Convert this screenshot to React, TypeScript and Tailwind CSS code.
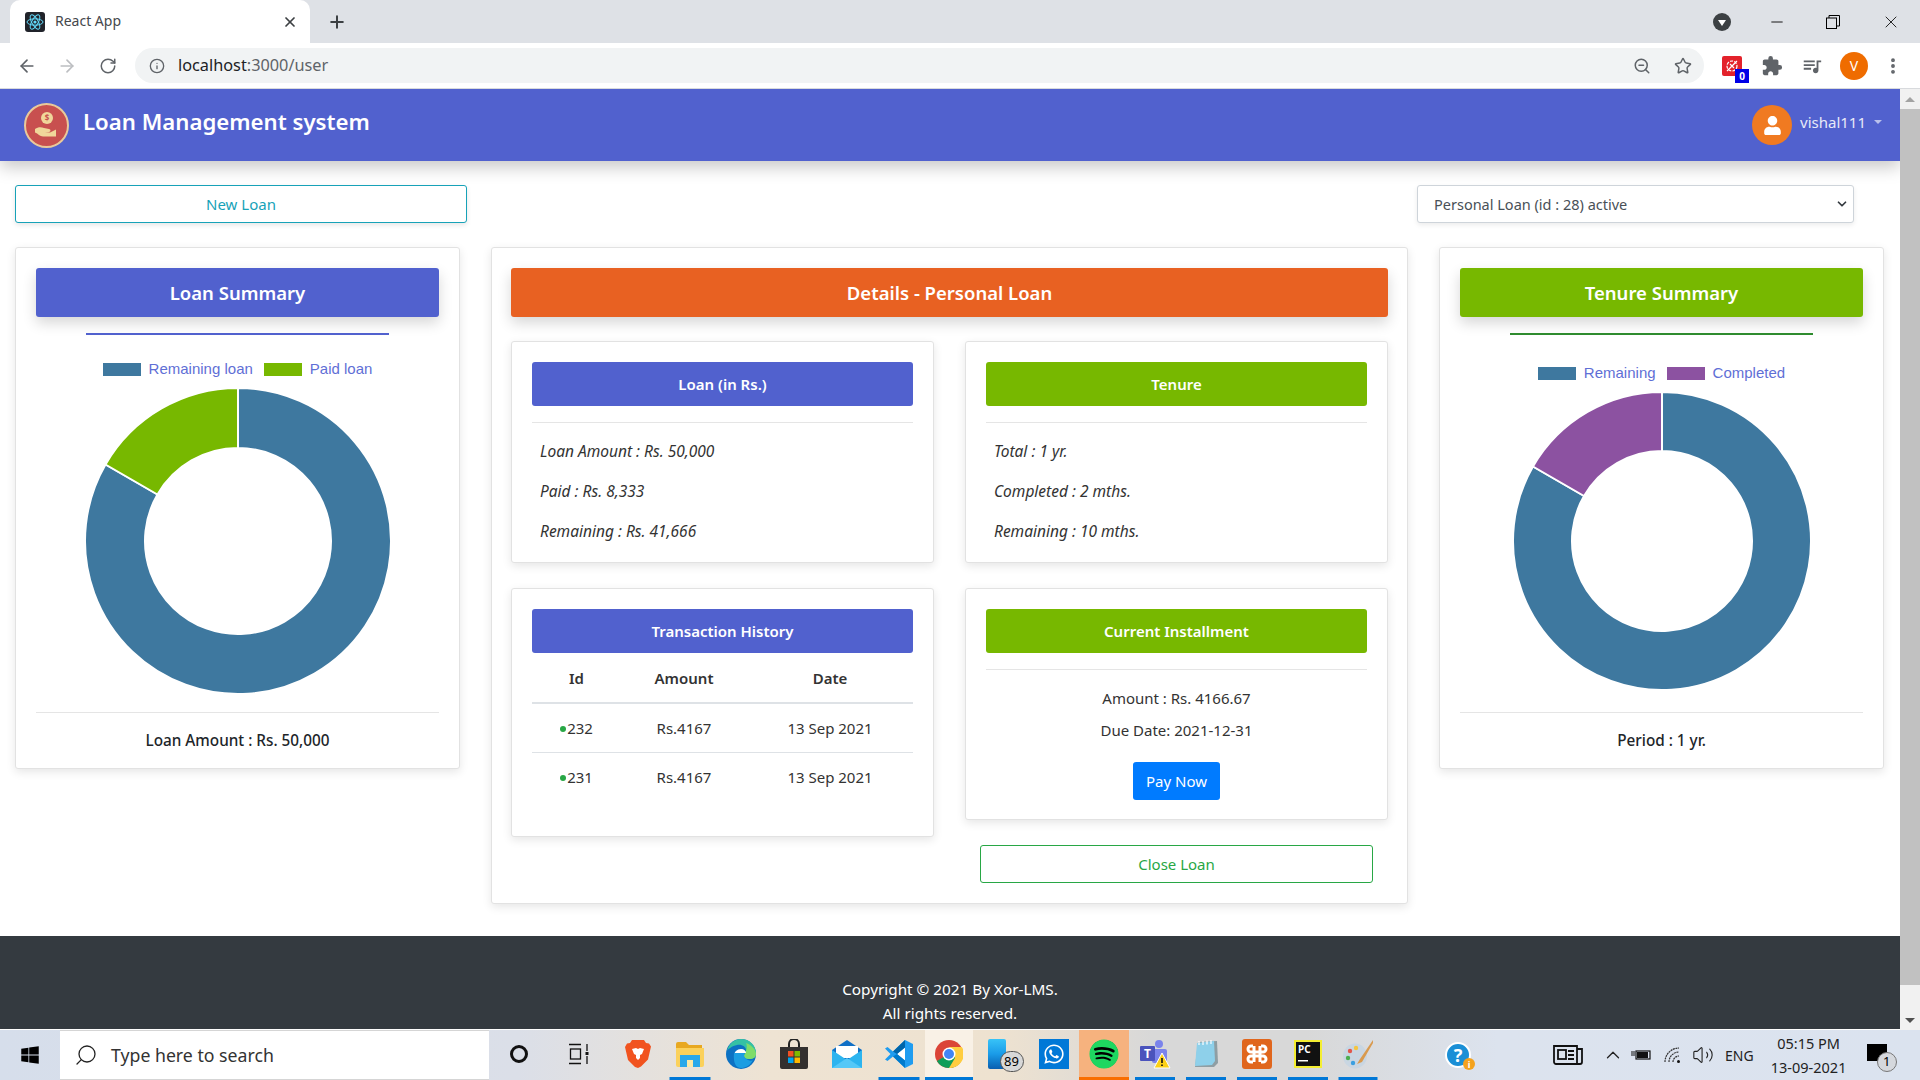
import type { ReactNode } from "react";
import {
  ArrowLeft,
  ArrowRight,
  ChevronDown,
  ChevronUp,
  EllipsisVertical,
  Info,
  Minus,
  Plus,
  RotateCw,
  Search,
  Star,
  Volume2,
  X,
  ZoomOut,
} from "lucide-react";
import { MdExtension, MdQueueMusic } from "react-icons/md";
import { FaSpotify, FaUser, FaWhatsapp, FaWindows } from "react-icons/fa";

const FONT = "font-['Noto_Sans','Open_Sans',sans-serif]";

function donutSlice(cx: number, cy: number, R: number, r: number, from: number, to: number) {
  const pt = (rad: number, a: number) => {
    const t = ((a - 90) * Math.PI) / 180;
    return `${(cx + rad * Math.cos(t)).toFixed(2)} ${(cy + rad * Math.sin(t)).toFixed(2)}`;
  };
  const large = to - from > 180 ? 1 : 0;
  return `M${pt(R, from)} A${R} ${R} 0 ${large} 1 ${pt(R, to)} L${pt(r, to)} A${r} ${r} 0 ${large} 0 ${pt(r, from)} Z`;
}

function Donut({ outer, inner, color }: { outer: number; inner: number; color: string }) {
  const size = outer * 2 + 4;
  const c = size / 2;
  return (
    <svg width={size} height={size} viewBox={`0 0 ${size} ${size}`}>
      <path d={donutSlice(c, c, outer, inner, 0, 300)} fill="#3e789f" stroke="#fff" strokeWidth="2" />
      <path d={donutSlice(c, c, outer, inner, 300, 360)} fill={color} stroke="#fff" strokeWidth="2" />
    </svg>
  );
}

function Legend({ items }: { items: { label: string; color: string }[] }) {
  return (
    <div className="flex items-center justify-center gap-[11px] font-['Liberation_Sans',sans-serif] text-[15px] leading-[16px] text-[#5f6fd6]">
      {items.map((item) => (
        <div key={item.label} className="flex items-center gap-[8px]">
          <span className={`h-[13px] w-[38px] ${item.color}`} />
          <span>{item.label}</span>
        </div>
      ))}
    </div>
  );
}

function Card({ className, children }: { className: string; children: ReactNode }) {
  return (
    <div className={`rounded-[3px] border border-[#e2e2e2] bg-white shadow-[0_3px_10px_rgba(0,0,0,0.1)] ${className}`}>
      {children}
    </div>
  );
}

function InnerCard({ className, title, color, children }: { className: string; title: string; color: string; children: ReactNode }) {
  return (
    <Card className={`px-[20px] pt-[20px] ${className}`}>
      <div className={`flex h-[44px] items-center justify-center rounded-[3px] text-[15px] font-semibold text-white ${color}`}>
        {title}
      </div>
      {children}
    </Card>
  );
}

function DetailLines({ lines }: { lines: string[] }) {
  return (
    <>
      <div className="mt-[16px] h-px bg-[#e5e5e5]" />
      <div className="mt-[8px] flex flex-col pl-[8px] text-[15.5px] italic leading-[40px] text-[#333]">
        {lines.map((line) => (
          <p key={line}>{line}</p>
        ))}
      </div>
    </>
  );
}

function Chrome() {
  return (
    <div className="shrink-0">
      <div className="flex h-[43px] items-end bg-[#dee1e6]">
        <div className="ml-[10px] flex h-[43px] w-[300px] items-center rounded-t-[10px] bg-white pl-[15px] pr-[12px]">
          <svg width="20" height="20" viewBox="0 0 20 20">
            <rect width="20" height="20" rx="3" fill="#20232a" />
            <g fill="none" stroke="#61dafb" strokeWidth="1">
              <ellipse cx="10" cy="10" rx="8" ry="3.2" />
              <ellipse cx="10" cy="10" rx="8" ry="3.2" transform="rotate(60 10 10)" />
              <ellipse cx="10" cy="10" rx="8" ry="3.2" transform="rotate(120 10 10)" />
            </g>
            <circle cx="10" cy="10" r="1.6" fill="#61dafb" />
          </svg>
          <span className="mb-[2px] ml-[10px] flex-1 text-[14px] text-[#45484c]">React App</span>
          <X size={16} strokeWidth={2.6} className="text-[#3c4043]" />
        </div>
        <div className="flex h-[43px] w-[54px] items-center justify-center">
          <Plus size={20} strokeWidth={2.4} className="text-[#3c4043]" />
        </div>
        <div className="flex-1" />
        <div className="flex h-[43px] items-center">
          <div className="flex h-[18px] w-[18px] items-center justify-center rounded-full bg-[#3c4043]">
            <span className="mt-[2px] h-0 w-0 border-x-[4px] border-t-[6px] border-x-transparent border-t-white" />
          </div>
          <Minus size={18} strokeWidth={1.2} className="ml-[37px] text-black" />
          <svg className="ml-[40px]" width="14" height="14" viewBox="0 0 14 14" fill="none" stroke="#000" strokeWidth="1">
            <rect x="0.5" y="3" width="10" height="10.5" fill="#dee1e6" />
            <path d="M3 3V.5h10.5V11H10.5" />
          </svg>
          <X size={20} strokeWidth={1} className="ml-[41px] mr-[19px] text-black" />
        </div>
      </div>
      <div className="flex h-[46px] items-center border-b border-[#d8dadd] bg-white">
        <ArrowLeft size={20} className="ml-[17px] text-[#5f6368]" />
        <ArrowRight size={20} className="ml-[20px] text-[#bcbec1]" />
        <RotateCw size={18} className="ml-[22px] text-[#5f6368]" />
        <div className="ml-[18px] flex h-[35px] w-[1569px] items-center rounded-full bg-[#f1f3f4] pl-[14px] pr-[12px]">
          <Info size={16} className="text-[#5f6368]" />
          <span className="ml-[13px] flex-1 text-[16.3px] text-[#5f6368]">
            <span className="text-[#202124]">localhost</span>:3000/user
          </span>
          <ZoomOut size={18} className="text-[#5f6368]" />
          <Star size={18} className="ml-[23px] text-[#5f6368]" />
        </div>
        <div className="relative ml-[18px] flex h-[20px] w-[20px] items-center justify-center rounded-[2px] bg-[#e3222b]">
          <svg width="16" height="16" viewBox="0 0 16 16" fill="none" stroke="#fff" strokeWidth="1.2">
            <circle cx="8" cy="8" r="5" strokeDasharray="3 1.2" />
            <path d="M3 13L13 3M6 6l4 4" />
          </svg>
          <span className="absolute -bottom-[7px] -right-[7px] flex h-[14px] w-[14px] items-center justify-center bg-[#0000e6] text-[10px] font-bold leading-none text-white">
            0
          </span>
        </div>
        <MdExtension size={22} className="ml-[19px] text-[#5f6368]" />
        <MdQueueMusic size={22} className="ml-[18px] text-[#5f6368]" />
        <div className="ml-[17px] flex h-[28px] w-[28px] items-center justify-center rounded-full bg-[#ef6c00] text-[14px] text-white">
          V
        </div>
        <EllipsisVertical size={20} strokeWidth={2.6} className="ml-[15px] text-[#5f6368]" />
      </div>
    </div>
  );
}

function Navbar() {
  return (
    <header className="relative z-10 flex h-[72px] shrink-0 items-center justify-between bg-[#5161ce] pl-[24px] pr-[18px] shadow-[0_6px_16px_rgba(0,0,0,0.22)]">
      <div className="flex items-center">
        <div className="flex h-[45px] w-[45px] items-center justify-center rounded-full border-2 border-[#e9c99a] bg-[#c8504f]">
          <svg width="32" height="32" viewBox="0 0 32 32">
            <circle cx="16" cy="9" r="6" fill="#f0d79a" />
            <text x="16" y="12" textAnchor="middle" fontSize="8" fill="#c8504f" fontWeight="700">$</text>
            <path d="M4 20c3-2 6-2 9-1l5 1c2 .4 2 2.6 0 3h-4l5 .5 6-3v7H12c-3 0-5-3-8-4z" fill="#f0d79a" />
          </svg>
        </div>
        <span className="mb-[7px] ml-[14px] text-[22.2px] font-semibold text-white">Loan Management system</span>
      </div>
      <div className="flex items-center">
        <div className="flex h-[40px] w-[40px] items-center justify-center rounded-full bg-[#f07a21]">
          <FaUser size={19} className="text-white" />
        </div>
        <span className="mb-[5px] ml-[8px] text-[15px] text-[#e8eaf8]">vishal111</span>
        <span className="mb-[6px] ml-[8px] h-0 w-0 border-x-[4px] border-t-[4px] border-x-transparent border-t-[#b9c0ec]" />
      </div>
    </header>
  );
}

function Dashboard() {
  return (
    <div className="px-[15px]">
      <div className="flex justify-between pr-[31px] pt-[24px]">
        <button className="flex h-[38px] w-[452px] items-center justify-center rounded-[3px] border border-[#17a2b8] bg-white text-[15px] text-[#17a2b8] shadow-[0_2px_5px_rgba(0,0,0,0.1)]">
          New Loan
        </button>
        <div className="relative h-[38px] w-[437px]">
          <select
            defaultValue="28"
            className="h-full w-full appearance-none rounded-[3px] border border-[#ced4da] bg-white px-[16px] pt-[1px] text-[14.5px] text-[#495057] shadow-[0_2px_5px_rgba(0,0,0,0.08)]"
          >
            <option value="28">Personal Loan (id : 28) active</option>
          </select>
          <ChevronDown size={14} strokeWidth={3} className="pointer-events-none absolute right-[5px] top-[12px] text-[#343a40]" />
        </div>
      </div>

      <div className="mt-[24px] flex items-start">
        <Card className="h-[522px] w-[445px] shrink-0 px-[20px] pt-[20px]">
          <div className="flex h-[49px] items-center justify-center rounded-[3px] bg-[#5161ce] text-[18.5px] font-semibold text-white shadow-[0_6px_14px_rgba(0,0,0,0.16)]">
            Loan Summary
          </div>
          <div className="mx-[50px] mt-[16px] h-[2px] bg-[#5161ce]" />
          <div className="mt-[26px]">
            <Legend
              items={[
                { label: "Remaining loan", color: "bg-[#3e789f]" },
                { label: "Paid loan", color: "bg-[#77b800]" },
              ]}
            />
          </div>
          <div className="mt-[9px] flex justify-center">
            <Donut outer={153} inner={93} color="#77b800" />
          </div>
          <div className="mt-[16px] h-px bg-[#e5e5e5]" />
          <p className="mt-[16px] text-center text-[15.3px] font-medium text-[#212529]">Loan Amount : Rs. 50,000</p>
        </Card>

        <Card className="ml-[31px] w-[917px] shrink-0 px-[19px] pb-[20px] pt-[20px]">
          <div className="flex h-[49px] items-center justify-center rounded-[3px] bg-[#e86122] text-[18.5px] font-semibold text-white shadow-[0_6px_14px_rgba(0,0,0,0.16)]">
            Details - Personal Loan
          </div>
          <div className="mt-[24px] grid grid-cols-2 items-start gap-x-[31px]">
            <div className="flex flex-col gap-[25px]">
              <InnerCard className="h-[222px]" title="Loan (in Rs.)" color="bg-[#5161ce]">
                <DetailLines lines={["Loan Amount : Rs. 50,000", "Paid : Rs. 8,333", "Remaining : Rs. 41,666"]} />
              </InnerCard>
              <InnerCard className="h-[249px]" title="Transaction History" color="bg-[#5161ce]">
                <table className="w-full text-center text-[15px] text-[#333]">
                  <thead>
                    <tr className="h-[50px] border-b-2 border-[#dee2e6] font-semibold">
                      <th className="w-[89px] pt-[2px] font-semibold">Id</th>
                      <th className="w-[126px] pt-[2px] font-semibold">Amount</th>
                      <th className="pt-[2px] font-semibold">Date</th>
                    </tr>
                  </thead>
                  <tbody>
                    {["232", "231"].map((id) => (
                      <tr key={id} className="h-[49px] border-b border-[#dee2e6] last:border-b-0">
                        <td>
                          <span className="mr-px inline-block h-[6px] w-[6px] rounded-full bg-[#28a745] align-middle" />
                          {id}
                        </td>
                        <td>Rs.4167</td>
                        <td>13 Sep 2021</td>
                      </tr>
                    ))}
                  </tbody>
                </table>
              </InnerCard>
            </div>
            <div className="flex flex-col">
              <InnerCard className="h-[222px]" title="Tenure" color="bg-[#77b800]">
                <DetailLines lines={["Total : 1 yr.", "Completed : 2 mths.", "Remaining : 10 mths."]} />
              </InnerCard>
              <InnerCard className="mt-[25px] h-[232px]" title="Current Installment" color="bg-[#77b800]">
                <div className="mt-[16px] h-px bg-[#e5e5e5]" />
                <div className="mt-[12px] text-center text-[15px] leading-[32px] text-[#333]">
                  <p>Amount : Rs. 4166.67</p>
                  <p>Due Date: 2021-12-31</p>
                </div>
                <div className="mt-[16px] flex justify-center">
                  <button className="flex h-[38px] w-[87px] items-center justify-center rounded-[3px] bg-[#007bff] text-[15px] text-white">
                    Pay Now
                  </button>
                </div>
              </InnerCard>
              <button className="mx-[15px] mt-[25px] flex h-[38px] items-center justify-center rounded-[3px] border border-[#28a745] bg-white text-[15px] text-[#28a745]">
                Close Loan
              </button>
            </div>
          </div>
        </Card>

        <Card className="ml-[31px] h-[522px] w-[445px] shrink-0 px-[20px] pt-[20px]">
          <div className="flex h-[49px] items-center justify-center rounded-[3px] bg-[#77b800] text-[18.5px] font-semibold text-white shadow-[0_6px_14px_rgba(0,0,0,0.16)]">
            Tenure Summary
          </div>
          <div className="mx-[50px] mt-[16px] h-[2px] bg-[#2e8b2e]" />
          <div className="mt-[30px]">
            <Legend
              items={[
                { label: "Remaining", color: "bg-[#3e789f]" },
                { label: "Completed", color: "bg-[#8c52a1]" },
              ]}
            />
          </div>
          <div className="mt-[9px] flex justify-center">
            <Donut outer={149} inner={90} color="#8c52a1" />
          </div>
          <div className="mt-[20px] h-px bg-[#e5e5e5]" />
          <p className="mt-[16px] text-center text-[15.3px] font-medium text-[#212529]">Period : 1 yr.</p>
        </Card>
      </div>
    </div>
  );
}

function Footer() {
  return (
    <footer className="mt-[32px] h-[93px] bg-[#343a40] pt-[41px] text-center text-[15.3px] leading-[24px] text-white">
      <p>Copyright © 2021 By Xor-LMS.</p>
      <p>All rights reserved.</p>
    </footer>
  );
}

function Scrollbar() {
  return (
    <div className="flex w-[20px] shrink-0 flex-col items-center bg-[#f1f1f1]">
      <div className="flex h-[20px] items-center">
        <span className="h-0 w-0 border-x-[5px] border-b-[5px] border-x-transparent border-b-[#a3a3a3]" />
      </div>
      <div className="h-[876px] w-full bg-[#c1c1c1]" />
      <div className="flex-1" />
      <div className="flex h-[20px] items-center">
        <span className="h-0 w-0 border-x-[5px] border-t-[5px] border-x-transparent border-t-[#505050]" />
      </div>
    </div>
  );
}

const taskIcons: { width: string; bar?: string; active?: string; icon: ReactNode }[] = [
  {
    width: "w-[60px]",
    icon: <span className="h-[18px] w-[18px] rounded-full border-[3px] border-[#111]" />,
  },
  {
    width: "w-[60px]",
    icon: (
      <svg width="22" height="22" viewBox="0 0 22 22" fill="none" stroke="#111" strokeWidth="1.3">
        <path d="M1 1.5h12M1 20.5h12" />
        <rect x="2.5" y="6" width="10" height="10" />
        <path d="M19 1v7M19 13v8" />
        <rect x="17.5" y="9" width="3" height="3" fill="#111" stroke="none" />
      </svg>
    ),
  },
  {
    width: "w-[58px]",
    icon: (
      <svg width="26" height="30" viewBox="0 0 26 30">
        <path d="M7 1h12l2 3 3 .5 2 3-3 13-7 7-3 1.5L10 28l-7-7L0 8l2-3.500L5 4z" fill="#f1531f" />
        <path d="M7 10l4-1 2 1 2-1 4 1-2 5-2 1v3l-2 2-2-2v-3l-2-1z" fill="#fff" />
      </svg>
    ),
  },
  {
    width: "w-[46px]",
    bar: "w-[41px] bg-[#0078d7]",
    icon: (
      <svg width="28" height="26" viewBox="0 0 28 26">
        <path d="M0 3a2 2 0 012-2h8l3 3h13v4H0z" fill="#e8a820" />
        <path d="M0 7h28v17a2 2 0 01-2 2H2a2 2 0 01-2-2z" fill="#fbd15b" />
        <path d="M4 14h20v12H4z" fill="#29a8ea" />
        <path d="M11 19h6v7h-6z" fill="#fbe9a8" />
      </svg>
    ),
  },
  {
    width: "w-[55px]",
    icon: (
      <svg width="30" height="30" viewBox="0 0 30 30">
        <circle cx="15" cy="15" r="15" fill="#0c71c3" />
        <path d="M1 12C3 4 9 0 15 0c8 0 15 6 15 14 0 4-3 6-7 6-3 0-5-1-5-3 0-3 2-3 2-6 0-3-4-6-9-5C6 7 2 10 1 12z" fill="#35c1a4" />
        <path d="M20 4c5 2 10 6 10 11 0 3-2 5-7 5-3 0-5-1-5-3 2-4 4-9 2-13z" fill="#7fdc6a" />
        <path d="M8 17c0-4 3-7 7-7 3 0 5 2 5 4H8z" fill="#fff" />
        <path d="M8 14h11c-2 2-1 5 3 7 2 1 4 1 5 0-3 6-8 8-12 8-5 0-8-5-7-15z" fill="#1b9de2" />
      </svg>
    ),
  },
  {
    width: "w-[52px]",
    icon: (
      <svg width="30" height="30" viewBox="0 0 30 30">
        <path d="M10 9V5a5 5 0 0110 0v4" fill="none" stroke="#222" strokeWidth="2" />
        <path d="M1 8h28v20a2 2 0 01-2 2H3a2 2 0 01-2-2z" fill="#33302f" />
        <rect x="9" y="12" width="5.500" height="5.500" fill="#f25022" />
        <rect x="15.500" y="12" width="5.500" height="5.500" fill="#7fba00" />
        <rect x="9" y="18.500" width="5.500" height="5.500" fill="#00a4ef" />
        <rect x="15.500" y="18.500" width="5.500" height="5.500" fill="#ffb900" />
      </svg>
    ),
  },
  {
    width: "w-[53px]",
    icon: (
      <svg width="30" height="28" viewBox="0 0 30 28">
        <path d="M0 10L15 0l15 10v18H0z" fill="#0f6fc6" />
        <path d="M4 6h22v12H4z" fill="#fff" />
        <path d="M0 10l15 10 15-10v18H0z" fill="#2cb4ef" />
        <path d="M0 28l15-10 15 10z" fill="#54c8f7" />
      </svg>
    ),
  },
  {
    width: "w-[52px]",
    bar: "w-[41px] bg-[#0078d7]",
    icon: (
      <svg width="30" height="30" viewBox="0 0 30 30">
        <path d="M21 1l8 4v20l-8 4L9 17.500 3.500 22 1 20.500 6.500 15 1 9.500 3.500 8 9 12.500z" fill="#1f9cf0" />
        <path d="M21 8.500L13 15l8 6.500z" fill="#fff" />
        <path d="M21 1L9 12.500l4 2.500 8-6.500z" fill="#0065a9" />
        <path d="M21 29L9 17.500l4-2.500 8 6.500z" fill="#007acc" />
      </svg>
    ),
  },
  {
    width: "w-[48px]",
    active: "bg-[#f9f1e6]",
    bar: "w-full bg-[#0078d7]",
    icon: (
      <svg width="28" height="28" viewBox="0 0 28 28">
        <circle cx="14" cy="14" r="14" fill="#db4437" />
        <path d="M14 14L1.900 21A14 14 0 0014 28 14 14 0 0026.100 21z" fill="#0f9d58" />
        <path d="M14 7h12.900A14 14 0 0114 28l6-10z" fill="#ffcd40" />
        <circle cx="14" cy="14" r="6.500" fill="#fff" />
        <circle cx="14" cy="14" r="5" fill="#4285f4" />
      </svg>
    ),
  },
  {
    width: "w-[55px]",
    icon: (
      <div className="relative ml-[10px] h-[30px] w-[36px]">
        <div className="h-[30px] w-[18px] rounded-[2px] bg-gradient-to-b from-[#38c3f7] via-[#1a9be8] to-[#0a5fb0]" />
        <span className="absolute bottom-[-3px] right-0 flex h-[21px] w-[24px] items-center justify-center rounded-full border border-[#555] bg-[#d8d8d8] text-[13px] leading-none text-black">
          89
        </span>
      </div>
    ),
  },
  {
    width: "w-[51px]",
    icon: (
      <div className="flex h-[30px] w-[30px] items-center justify-center bg-[#0078d7]">
        <FaWhatsapp size={22} className="text-white" />
      </div>
    ),
  },
  {
    width: "w-[50px]",
    active: "bg-[#f6b27e]",
    bar: "w-full bg-[#f96e00]",
    icon: (
      <span className="flex h-[28px] w-[28px] items-center justify-center rounded-full bg-black">
        <FaSpotify size={30} className="shrink-0 text-[#1ed760]" />
      </span>
    ),
  },
  {
    width: "w-[52px]",
    bar: "w-[40px] bg-[#0078d7]",
    icon: (
      <svg width="32" height="30" viewBox="0 0 32 30">
        <circle cx="20" cy="5" r="4" fill="#7b83eb" />
        <rect x="13" y="10" width="15" height="14" rx="2" fill="#7b83eb" />
        <rect x="1" y="7" width="15" height="15" rx="1" fill="#4b53bc" />
        <text x="8.500" y="19" textAnchor="middle" fontSize="12" fontWeight="700" fill="#fff">T</text>
        <path d="M23 14l8 15H15z" fill="#fcd116" stroke="#fff" strokeWidth="1" />
        <path d="M23 19v5M23 25.500v1.500" stroke="#111" strokeWidth="1.600" />
      </svg>
    ),
  },
  {
    width: "w-[50px]",
    bar: "w-[40px] bg-[#0078d7]",
    icon: (
      <svg width="30" height="30" viewBox="0 0 30 30">
        <path d="M7 3l19-1 1 22-4 4H4z" fill="#8f9ea3" />
        <path d="M6 4l17-2 1 20-3 4-17 1z" fill="#8ed0ea" />
        <path d="M8 2v4M12 2v4M16 1.500v4M20 1v4" stroke="#fff" strokeWidth="1.200" />
      </svg>
    ),
  },
  {
    width: "w-[52px]",
    bar: "w-[40px] bg-[#0078d7]",
    icon: (
      <div className="flex h-[30px] w-[30px] items-center justify-center rounded-[3px] bg-[#e0661d]">
        <svg width="22" height="22" viewBox="0 0 22 22" fill="none" stroke="#fff" strokeWidth="3">
          <path d="M7 3H5a2.500 2.500 0 000 6h12a2.500 2.500 0 000-6h-2M7 19H5a2.500 2.500 0 010-6h12a2.500 2.500 0 010 6h-2M8 3v16M14 3v16" />
        </svg>
      </div>
    ),
  },
  {
    width: "w-[50px]",
    bar: "w-[40px] bg-[#0078d7]",
    icon: (
      <svg width="28" height="28" viewBox="0 0 28 28">
        <rect width="28" height="28" fill="#f4ee32" />
        <rect x="2" y="2" width="24" height="24" fill="#111" />
        <text x="4" y="13" fontSize="10" fontWeight="700" fill="#fff">PC</text>
        <rect x="4" y="20" width="10" height="1.500" fill="#fff" />
      </svg>
    ),
  },
  {
    width: "w-[50px]",
    bar: "w-[39px] bg-[#0078d7]",
    icon: (
      <svg width="32" height="30" viewBox="0 0 32 30">
        <ellipse cx="13" cy="17" rx="12" ry="12.500" fill="#c9d6e2" />
        <circle cx="8" cy="12" r="2.200" fill="#e2574c" />
        <circle cx="14" cy="9" r="2.200" fill="#f4c542" />
        <circle cx="6" cy="19" r="2.200" fill="#4caf50" />
        <circle cx="11" cy="24" r="2.200" fill="#3b9fe0" />
        <path d="M31 1L18 20l-3 5 5-2L31 4z" fill="#d99a4e" />
      </svg>
    ),
  },
];

function Taskbar() {
  return (
    <div className="flex h-[50px] shrink-0 items-stretch bg-[linear-gradient(90deg,#d6deeb_0%,#dbdfe8_27%,#eee3d3_40%,#eee2d0_52%,#d8d8d8_60%,#d8d8d8_68%,#dce3ee_78%,#dbe3ef_100%)]">
      <div className="flex w-[60px] items-center justify-center">
        <FaWindows size={20} className="text-black" />
      </div>
      <div className="flex w-[429px] items-center border-y border-[#d5d5d5] bg-white pl-[14px]">
        <Search size={24} strokeWidth={1.3} className="-scale-x-100 text-[#222]" />
        <span className="ml-[13px] text-[17.7px] text-[#333]">Type here to search</span>
      </div>
      {taskIcons.map((item, i) => (
        <div key={i} className={`relative flex items-center justify-center pb-[2px] ${item.width} ${item.active ?? ""}`}>
          {item.icon}
          {item.bar ? <span className={`absolute bottom-0 left-1/2 h-[3px] -translate-x-1/2 ${item.bar}`} /> : null}
        </div>
      ))}
      <div className="flex flex-1 items-center pl-[62px] text-[#222]">
        <div className="relative flex h-[26px] w-[26px] items-center justify-center rounded-full border-2 border-white bg-[#1a8fd6] text-[18px] font-bold leading-none text-white">
          ?
          <span className="absolute -bottom-[4px] -right-[6px] flex h-[12px] w-[12px] items-center justify-center rounded-full bg-[#f4a21e] text-[9px] leading-none">
            i
          </span>
        </div>
        <svg className="ml-[82px]" width="30" height="22" viewBox="0 0 30 22" fill="none" stroke="#111" strokeWidth="1.800">
          <path d="M1 2h23v18H3a2 2 0 01-2-2zM24 5h5v13a2 2 0 01-2 2h-3" />
          <rect x="5" y="6" width="8" height="9" />
          <path d="M15 7h6M15 11h6M15 15h6" />
        </svg>
        <ChevronUp size={22} strokeWidth={1.4} className="ml-[19px]" />
        <svg className="ml-[7px]" width="20" height="14" viewBox="0 0 20 14">
          <rect x="5" y="3" width="14" height="8" fill="none" stroke="#111" strokeWidth="1.200" />
          <rect x="6" y="4" width="11" height="6" fill="#111" />
          <path d="M0 7h4M1 3v3M3 3v3" stroke="#111" strokeWidth="1" />
        </svg>
        <svg className="ml-[13px]" width="20" height="18" viewBox="0 0 20 18" fill="none" stroke="#333" strokeWidth="1.200">
          <path d="M1 16a14 14 0 0114-14M5 16a10 10 0 0110-10M9 16a6 6 0 016-6" strokeDasharray="2 0.6" />
          <circle cx="14.500" cy="15.500" r="1.500" fill="#111" stroke="none" />
        </svg>
        <Volume2 size={22} strokeWidth={1.2} className="ml-[8px]" />
        <span className="ml-[11px] text-[14px]">ENG</span>
        <div className="ml-[16px] flex w-[78px] flex-col items-center text-[14.5px] leading-[24px]">
          <span>05:15 PM</span>
          <span>13-09-2021</span>
        </div>
        <div className="relative ml-[19px] mb-[6px] h-[17px] w-[20px] bg-black">
          <span className="absolute -bottom-[11px] -right-[10px] flex h-[20px] w-[20px] items-center justify-center rounded-full border border-[#777] bg-[#d5d8dd] text-[13px] leading-none text-black">
            1
          </span>
        </div>
      </div>
    </div>
  );
}

export default function App() {
  return (
    <div className={`flex h-[1080px] w-[1920px] flex-col overflow-hidden bg-white ${FONT}`}>
      <Chrome />
      <div className="flex min-h-0 flex-1">
        <main className="flex w-[1900px] shrink-0 flex-col overflow-hidden">
          <Navbar />
          <Dashboard />
          <Footer />
        </main>
        <Scrollbar />
      </div>
      <Taskbar />
    </div>
  );
}
